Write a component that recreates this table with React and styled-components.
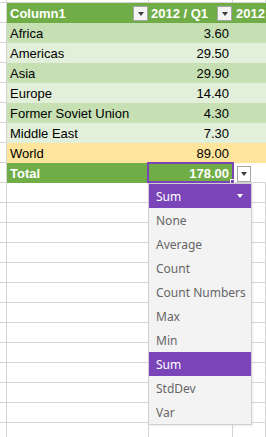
import React from 'react';
import styled, { createGlobalStyle, css } from 'styled-components';

const GlobalStyle = createGlobalStyle`
  html, body { margin: 0; padding: 0; background: #ffffff; overflow: hidden; }
  * { box-sizing: border-box; }
`;

const GRID = '#d4d4d4';
const GREEN = '#70ad47';
const PURPLE = '#7a45b8';

const tones = {
  dark: '#c6e0b4',
  light: '#e2efda',
  world: '#ffe49c',
  head: GREEN,
};

const Sheet = styled.div`
  position: relative;
  width: 266px;
  height: 437px;
  overflow: hidden;
  font-family: "Liberation Sans", Arial, sans-serif;
  font-size: 13px;
  color: #000;
`;

const Row = styled.div`
  display: grid;
  grid-template-columns: 7px 142px 84px 33px;
  height: ${(p) => p.$h || 20}px;
`;

const Stub = styled.div`
  border-right: 1px solid ${GRID};
  border-bottom: 1px solid ${GRID};
`;

const Cell = styled.div`
  position: relative;
  display: flex;
  align-items: center;
  min-width: 0;
  white-space: nowrap;
  padding: 0 ${(p) => (p.$right ? 4 : 0)}px 0 ${(p) => p.$pl ?? 3}px;
  justify-content: ${(p) => (p.$right ? 'flex-end' : 'flex-start')};
  ${(p) =>
    p.$tone
      ? css`
          background: ${tones[p.$tone]};
        `
      : css`
          border-right: 1px solid ${GRID};
          border-bottom: 1px solid ${GRID};
        `}
  ${(p) =>
    p.$tone === 'head' &&
    css`
      color: #fff;
      font-weight: bold;
      justify-content: space-between;
      padding-right: 1px;
    `}
  ${(p) =>
    p.$total &&
    css`
      justify-content: flex-end;
      padding-right: 4px;
    `}
`;

const FilterButton = styled.span`
  flex: none;
  width: 15px;
  height: 15px;
  margin-top: 1px;
  background: #f4f4f4;
  border: 1px solid #a6a6a6;
  display: flex;
  align-items: center;
  justify-content: center;
  &::after {
    content: '';
    border-left: 3.5px solid transparent;
    border-right: 3.5px solid transparent;
    border-top: 4px solid #404040;
  }
`;

const SelectionFrame = styled.div`
  position: absolute;
  left: -2px;
  top: -1px;
  width: 87px;
  height: 21px;
  border: 2px solid ${PURPLE};
  pointer-events: none;
`;

const FillHandle = styled.div`
  position: absolute;
  right: -3px;
  bottom: -3px;
  width: 5px;
  height: 5px;
  background: ${PURPLE};
  border: 1px solid #fff;
`;

const TotalButtonCell = styled.div`
  border-bottom: 1px solid ${GRID};
  padding: 3px 0 0 4px;
`;

const TotalButton = styled.div`
  width: 14px;
  height: 16px;
  background: #fff;
  border: 1px solid #a6a6a6;
  display: flex;
  align-items: center;
  justify-content: center;
  &::after {
    content: '';
    border-left: 3.5px solid transparent;
    border-right: 3.5px solid transparent;
    border-top: 4px solid #404040;
  }
`;

const Menu = styled.div`
  position: absolute;
  left: 148px;
  top: 183px;
  width: 104px;
  border: 1px solid #cfcfcf;
  background: #f3f3f3;
  font-family: "Noto Sans", "Open Sans", sans-serif;
  font-size: 12px;
  box-shadow: 1px 1px 2px rgba(0, 0, 0, 0.08);
`;

const MenuHeader = styled.div`
  height: 24px;
  background: ${PURPLE};
  color: #fff;
  display: flex;
  align-items: center;
  justify-content: space-between;
  padding: 0 8px 0 7px;
  &::after {
    content: '';
    border-left: 3.5px solid transparent;
    border-right: 3.5px solid transparent;
    border-top: 4px solid #fff;
  }
`;

const MenuItem = styled.div`
  height: 24px;
  display: flex;
  align-items: center;
  padding-left: 7px;
  color: ${(p) => (p.$active ? '#fff' : '#666666')};
  background: ${(p) => (p.$active ? PURPLE : 'transparent')};
`;

const rows = [
  { name: 'Africa', v: '3.60', tone: 'dark' },
  { name: 'Americas', v: '29.50', tone: 'light' },
  { name: 'Asia', v: '29.90', tone: 'dark' },
  { name: 'Europe', v: '14.40', tone: 'light' },
  { name: 'Former Soviet Union', v: '4.30', tone: 'dark' },
  { name: 'Middle East', v: '7.30', tone: 'light' },
  { name: 'World', v: '89.00', tone: 'world' },
];

const options = ['None', 'Average', 'Count', 'Count Numbers', 'Max', 'Min', 'Sum', 'StdDev', 'Var'];

export default function App() {
  const emptyRows = Array.from({ length: 14 });
  return (
    <Sheet>
      <GlobalStyle />
      <Row $h={3}>
        <Stub />
        <Cell />
        <Cell />
        <Cell />
      </Row>
      <Row>
        <Stub />
        <Cell $tone="head">
          Column1
          <FilterButton />
        </Cell>
        <Cell $tone="head" $pl={2}>
          2012 / Q1
          <FilterButton />
        </Cell>
        <Cell $tone="head">2012</Cell>
      </Row>
      {rows.map((r) => (
        <Row key={r.name}>
          <Stub />
          <Cell $tone={r.tone}>{r.name}</Cell>
          <Cell $tone={r.tone} $right>
            {r.v}
          </Cell>
          <Cell $tone={r.tone} />
        </Row>
      ))}
      <Row>
        <Stub />
        <Cell $tone="head">Total</Cell>
        <Cell $tone="head" $total $right>
          178.00
          <SelectionFrame>
            <FillHandle />
          </SelectionFrame>
        </Cell>
        <TotalButtonCell>
          <TotalButton />
        </TotalButtonCell>
      </Row>
      {emptyRows.map((_, i) => (
        <Row key={i}>
          <Stub />
          <Cell />
          <Cell />
          <Cell />
        </Row>
      ))}
      <Menu>
        <MenuHeader>Sum</MenuHeader>
        {options.map((o) => (
          <MenuItem key={o} $active={o === 'Sum'}>
            {o}
          </MenuItem>
        ))}
      </Menu>
    </Sheet>
  );
}
